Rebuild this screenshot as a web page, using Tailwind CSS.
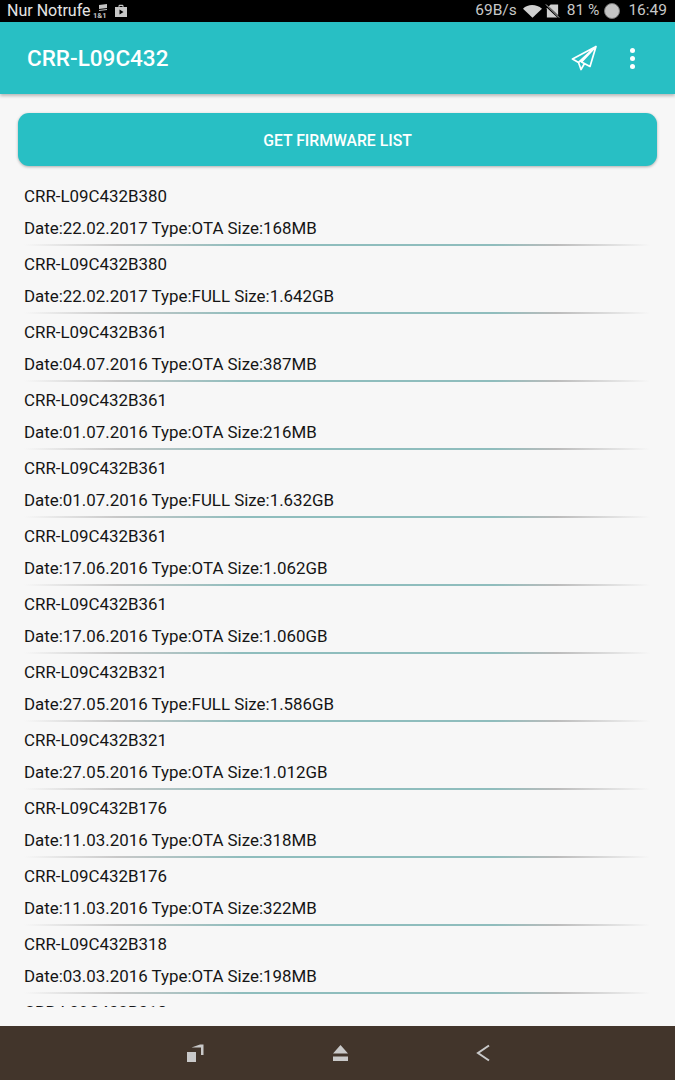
<!DOCTYPE html>
<html lang="en">
<head>
    <meta charset="UTF-8">
    <title>Firmware list</title>
    <script src="https://cdn.jsdelivr.net/npm/@tailwindcss/browser@4"></script>
</head>
<body class="w-[675px] h-[1080px] overflow-hidden bg-[#f7f7f7] font-['Roboto',sans-serif] flex flex-col">
    <!-- status bar -->
    <div class="h-[22px] bg-black flex items-center pl-[7px] pr-[8px] text-[15.5px] text-[#c8c8c8] shrink-0">
        <span class="text-[16px] text-[#e4e4e4]">Nur Notrufe</span>
        <svg class="ml-[2px] mt-[1px]" width="15" height="15" viewBox="0 0 15 15" fill="#c4c4c4">
            <path d="M6 1l8-1v4l-8 1zM6 6l8-1v1l-8 1z"/>
            <text x="0" y="14" font-size="7.5" font-family="Roboto" font-weight="700">1&amp;1</text>
        </svg>
        <svg class="ml-[6px]" width="14" height="14" viewBox="0 0 14 14">
            <path fill="#c8c8c8" fill-rule="evenodd" d="M1 3h3.500V2a1.200 1.200 0 0 1 1.200-1.200h2.600A1.200 1.200 0 0 1 9.500 2v1H13v10H1zM5.500 3h3V2h-3zM5.500 5.500v5l4-2.500z"/>
        </svg>
        <span class="ml-auto">69B/s</span>
        <svg class="ml-[6px]" width="19" height="14" viewBox="0 0 20 14"><path fill="#d0d0d0" d="M0 4.500C5-.5 14-.5 20 4.500L10 14z"/></svg>
        <svg class="ml-[3px]" width="15" height="16" viewBox="0 0 16 16">
            <path fill="#d0d0d0" d="M6 1h8v14H2V5z"/>
            <path stroke="#000" stroke-width="2.500" d="M0 1l16 15"/>
            <path stroke="#d0d0d0" stroke-width="1" d="M1 1l14 14"/>
        </svg>
        <span class="ml-[7px]">81 %</span>
        <span class="ml-[5px] w-[16px] h-[16px] rounded-full bg-[#c4c4c4] border border-[#777]"></span>
        <span class="ml-[8px]">16:49</span>
    </div>

    <!-- toolbar -->
    <div class="h-[72px] bg-[#28bfc4] shadow-[0_2px_3px_rgba(0,0,0,0.25)] flex items-center pl-[27px] shrink-0 z-10">
        <h1 class="text-[22.5px] font-medium text-white pt-[2px]">CRR-L09C432</h1>
        <svg class="ml-auto mr-[33px] -mt-[1px]" width="26" height="26" viewBox="0 0 26 26" fill="none" stroke="#fff" stroke-width="1.700" stroke-linejoin="round">
            <path d="M25 1.500L1.500 14l6 3.500zM25 1.500L19 21.500l-8.500-4.500zM25 1.500L7.500 17.500l2.500 7 3.500-6"/>
        </svg>
        <div class="flex flex-col gap-[3px] mr-[40px]">
            <span class="w-[5px] h-[5px] rounded-full bg-white"></span>
            <span class="w-[5px] h-[5px] rounded-full bg-white"></span>
            <span class="w-[5px] h-[5px] rounded-full bg-white"></span>
        </div>
    </div>

    <!-- content -->
    <div class="flex-1 min-h-0 flex flex-col">
        <button class="mt-[19px] mx-[18px] h-[53px] pt-[2px] shrink-0 rounded-[11px] bg-[#28bfc4] text-white text-[15.75px] font-medium shadow-[0_1px_3px_rgba(0,0,0,0.3)]">GET FIRMWARE LIST</button>

        <div class="mt-[12px] h-[829px] overflow-hidden pl-[24px] pr-[25px] text-[16.9px] text-[#151515]">
            <div class="h-[68px] flex flex-col">
                <p class="h-[32px] leading-[37px]">CRR-L09C432B380</p>
                <p class="h-[34px] leading-[37px]">Date:22.02.2017 Type:OTA Size:168MB</p>
                <div class="h-[2px] bg-[linear-gradient(to_right,transparent,#c8c8c8_15%,#8fbdbd_35%,#8fbdbd_75%,#bbb_85%,transparent)]"></div>
            </div>
            <div class="h-[68px] flex flex-col">
                <p class="h-[32px] leading-[37px]">CRR-L09C432B380</p>
                <p class="h-[34px] leading-[37px]">Date:22.02.2017 Type:FULL Size:1.642GB</p>
                <div class="h-[2px] bg-[linear-gradient(to_right,transparent,#c8c8c8_15%,#8fbdbd_35%,#8fbdbd_75%,#bbb_85%,transparent)]"></div>
            </div>
            <div class="h-[68px] flex flex-col">
                <p class="h-[32px] leading-[37px]">CRR-L09C432B361</p>
                <p class="h-[34px] leading-[37px]">Date:04.07.2016 Type:OTA Size:387MB</p>
                <div class="h-[2px] bg-[linear-gradient(to_right,transparent,#c8c8c8_15%,#8fbdbd_35%,#8fbdbd_75%,#bbb_85%,transparent)]"></div>
            </div>
            <div class="h-[68px] flex flex-col">
                <p class="h-[32px] leading-[37px]">CRR-L09C432B361</p>
                <p class="h-[34px] leading-[37px]">Date:01.07.2016 Type:OTA Size:216MB</p>
                <div class="h-[2px] bg-[linear-gradient(to_right,transparent,#c8c8c8_15%,#8fbdbd_35%,#8fbdbd_75%,#bbb_85%,transparent)]"></div>
            </div>
            <div class="h-[68px] flex flex-col">
                <p class="h-[32px] leading-[37px]">CRR-L09C432B361</p>
                <p class="h-[34px] leading-[37px]">Date:01.07.2016 Type:FULL Size:1.632GB</p>
                <div class="h-[2px] bg-[linear-gradient(to_right,transparent,#c8c8c8_15%,#8fbdbd_35%,#8fbdbd_75%,#bbb_85%,transparent)]"></div>
            </div>
            <div class="h-[68px] flex flex-col">
                <p class="h-[32px] leading-[37px]">CRR-L09C432B361</p>
                <p class="h-[34px] leading-[37px]">Date:17.06.2016 Type:OTA Size:1.062GB</p>
                <div class="h-[2px] bg-[linear-gradient(to_right,transparent,#c8c8c8_15%,#8fbdbd_35%,#8fbdbd_75%,#bbb_85%,transparent)]"></div>
            </div>
            <div class="h-[68px] flex flex-col">
                <p class="h-[32px] leading-[37px]">CRR-L09C432B361</p>
                <p class="h-[34px] leading-[37px]">Date:17.06.2016 Type:OTA Size:1.060GB</p>
                <div class="h-[2px] bg-[linear-gradient(to_right,transparent,#c8c8c8_15%,#8fbdbd_35%,#8fbdbd_75%,#bbb_85%,transparent)]"></div>
            </div>
            <div class="h-[68px] flex flex-col">
                <p class="h-[32px] leading-[37px]">CRR-L09C432B321</p>
                <p class="h-[34px] leading-[37px]">Date:27.05.2016 Type:FULL Size:1.586GB</p>
                <div class="h-[2px] bg-[linear-gradient(to_right,transparent,#c8c8c8_15%,#8fbdbd_35%,#8fbdbd_75%,#bbb_85%,transparent)]"></div>
            </div>
            <div class="h-[68px] flex flex-col">
                <p class="h-[32px] leading-[37px]">CRR-L09C432B321</p>
                <p class="h-[34px] leading-[37px]">Date:27.05.2016 Type:OTA Size:1.012GB</p>
                <div class="h-[2px] bg-[linear-gradient(to_right,transparent,#c8c8c8_15%,#8fbdbd_35%,#8fbdbd_75%,#bbb_85%,transparent)]"></div>
            </div>
            <div class="h-[68px] flex flex-col">
                <p class="h-[32px] leading-[37px]">CRR-L09C432B176</p>
                <p class="h-[34px] leading-[37px]">Date:11.03.2016 Type:OTA Size:318MB</p>
                <div class="h-[2px] bg-[linear-gradient(to_right,transparent,#c8c8c8_15%,#8fbdbd_35%,#8fbdbd_75%,#bbb_85%,transparent)]"></div>
            </div>
            <div class="h-[68px] flex flex-col">
                <p class="h-[32px] leading-[37px]">CRR-L09C432B176</p>
                <p class="h-[34px] leading-[37px]">Date:11.03.2016 Type:OTA Size:322MB</p>
                <div class="h-[2px] bg-[linear-gradient(to_right,transparent,#c8c8c8_15%,#8fbdbd_35%,#8fbdbd_75%,#bbb_85%,transparent)]"></div>
            </div>
            <div class="h-[68px] flex flex-col">
                <p class="h-[32px] leading-[37px]">CRR-L09C432B318</p>
                <p class="h-[34px] leading-[37px]">Date:03.03.2016 Type:OTA Size:198MB</p>
                <div class="h-[2px] bg-[linear-gradient(to_right,transparent,#c8c8c8_15%,#8fbdbd_35%,#8fbdbd_75%,#bbb_85%,transparent)]"></div>
            </div>
            <div class="h-[68px] flex flex-col">
                <p class="h-[32px] leading-[37px]">CRR-L09C432B318</p>
            </div>
        </div>
    </div>

    <!-- nav bar -->
    <div class="h-[54px] bg-[#42352b] shrink-0 flex items-center pl-[187px]">
        <svg width="17" height="18" viewBox="0 0 17 18" fill="#c9c9c9">
            <path d="M0 8h9v10H0z"/>
            <path d="M4.500 3.500L13 .5h3.500V11H14V3.500z"/>
        </svg>
        <svg class="ml-[129px]" width="15" height="18" viewBox="0 0 15 18" fill="#c9c9c9">
            <path d="M7.500 1l7.500 8.500H0zM0 12.500h15V17H0z"/>
        </svg>
        <svg class="ml-[128px]" width="14" height="18" viewBox="0 0 14 18" fill="none" stroke="#c9c9c9" stroke-width="2">
            <path d="M13 1.500L2 9l11 7.500"/>
        </svg>
    </div>
</body>
</html>
